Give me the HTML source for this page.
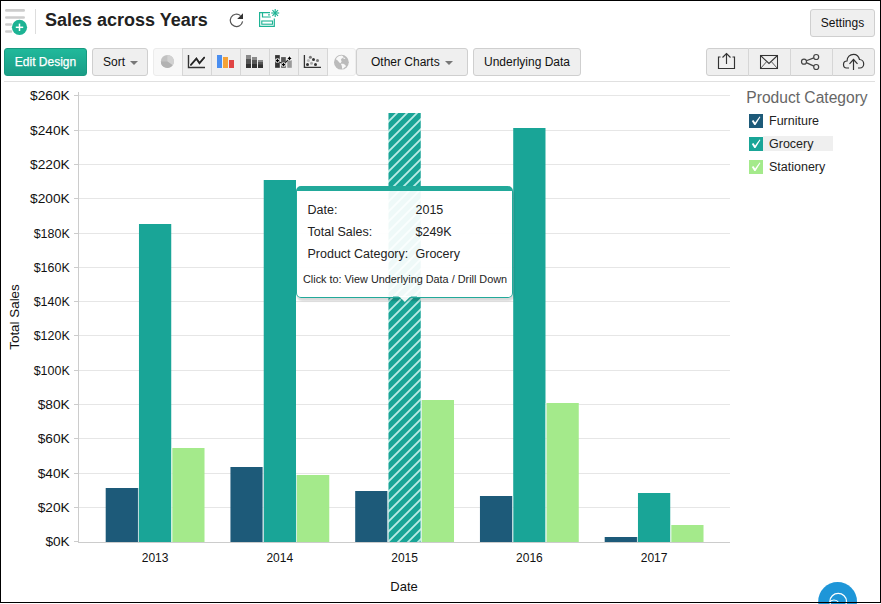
<!DOCTYPE html>
<html><head><meta charset="utf-8">
<style>
*{margin:0;padding:0;box-sizing:border-box}
html,body{width:881px;height:604px;overflow:hidden;background:#fff}
body{position:relative;font-family:"Liberation Sans", sans-serif;color:#222}
.abs{position:absolute}
.btn{position:absolute;top:48px;height:28px;background:#efefef;border:1px solid #cfcfcf;border-radius:3px;font-size:12px;line-height:26px;text-align:center;color:#111}
svg text{font-family:"Liberation Sans", sans-serif}
.yl{font-size:12px;fill:#111}
.xl{font-size:12px;fill:#111}
.at{font-size:13px;fill:#111}
.at2{font-size:13.4px;fill:#111}
</style></head><body>
<!-- frame -->
<div class="abs" style="left:0;top:0;width:881px;height:603px;border:1px solid #000;border-right:none"></div>
<div class="abs" style="left:880px;top:0;width:1px;height:603px;background:#000"></div>

<!-- header -->
<svg class="abs" style="left:0;top:0" width="40" height="40">
 <g stroke="#cdcdcd" stroke-width="2.6" stroke-linecap="round">
  <line x1="6.3" y1="10.4" x2="23.7" y2="10.4"/>
  <line x1="6.3" y1="17.5" x2="23.7" y2="17.5"/>
  <line x1="6.3" y1="24.5" x2="11" y2="24.5"/>
  <line x1="6.3" y1="31.5" x2="11" y2="31.5"/>
 </g>
 <circle cx="19.5" cy="27.3" r="8.3" fill="#fff"/>
 <circle cx="19.5" cy="27.3" r="7.6" fill="#1db394"/>
 <g stroke="#fff" stroke-width="1.5"><line x1="15.8" y1="27.3" x2="23.2" y2="27.3"/><line x1="19.5" y1="23.6" x2="19.5" y2="31"/></g>
</svg>
<div class="abs" style="left:35px;top:9px;width:1px;height:25px;background:#ddd"></div>
<div class="abs" style="left:45px;top:8.8px;font-size:18px;font-weight:bold;color:#222;white-space:nowrap;line-height:22px">Sales across Years</div>
<svg class="abs" style="left:225px;top:8px" width="60" height="26">
 <path d="M15.5 7.6 A6.2 6.2 0 1 0 17.6 13.4" fill="none" stroke="#555" stroke-width="1.2"/>
 <path d="M12.2 11 L18 5.2 L18 11 Z" fill="#333"/>
 <g fill="none" stroke="#1db394" stroke-width="1.2">
  <path d="M45 4.6 L34.6 4.6 L34.6 18.4 L49.3 18.4 L49.3 10.5"/>
  <path d="M37.5 4.6 V9 H45.8"/>
  <rect x="36.8" y="13" width="10.7" height="3.2" stroke-width="1.1"/>
 </g>
 <circle cx="44" cy="6.8" r="0.85" fill="#1db394"/>
 <g stroke="#1db394" stroke-width="1.15"><line x1="50.2" y1="1" x2="50.2" y2="9"/><line x1="46.2" y1="5" x2="54.2" y2="5"/><line x1="47.4" y1="2.2" x2="53" y2="7.8"/><line x1="53" y1="2.2" x2="47.4" y2="7.8"/></g>
</svg>
<div class="btn" style="left:810px;top:9px;width:65px;height:28px;line-height:26.5px">Settings</div>

<!-- toolbar -->
<div class="btn" style="left:4px;width:83px;background:linear-gradient(#20b99b,#1a9c86);border-color:#17997f;color:#fff;font-weight:normal;-webkit-text-stroke:0.25px #fff">Edit Design</div>
<div class="btn" style="left:92px;width:56px;text-align:left;padding-left:10px">Sort <span style="display:inline-block;width:0;height:0;border-left:4px solid transparent;border-right:4px solid transparent;border-top:4px solid #777;vertical-align:middle;margin-left:2px"></span></div>
<div class="btn" style="left:153px;width:203px;background:#f8f8f8;border-color:#ececec"></div>
<div class="btn" style="left:182px;width:146px;border-radius:0;border-color:#d6d6d6"></div>
<div class="abs" style="left:211px;top:48px;width:1px;height:28px;background:#d6d6d6"></div>
<div class="abs" style="left:240px;top:48px;width:1px;height:28px;background:#d6d6d6"></div>
<div class="abs" style="left:269px;top:48px;width:1px;height:28px;background:#d6d6d6"></div>
<div class="abs" style="left:298px;top:48px;width:1px;height:28px;background:#d6d6d6"></div>

<div class="btn" style="left:356px;width:112px">Other Charts <span style="display:inline-block;width:0;height:0;border-left:4px solid transparent;border-right:4px solid transparent;border-top:4px solid #777;vertical-align:middle;margin-left:2px"></span></div>
<div class="btn" style="left:473px;width:108px">Underlying Data</div>
<div class="btn" style="left:706px;width:169px"></div>
<div class="abs" style="left:748px;top:48px;width:1px;height:28px;background:#d6d6d6"></div>
<div class="abs" style="left:790px;top:48px;width:1px;height:28px;background:#d6d6d6"></div>
<div class="abs" style="left:832px;top:48px;width:1px;height:28px;background:#d6d6d6"></div>
<div class="abs" style="left:4px;top:81px;width:871px;height:1px;background:#e0e0e0"></div>
<svg class="abs" style="left:0;top:40px" width="881" height="40">
 <!-- pie -->
 <g transform="translate(167.4,21.4)">
  <circle r="6.5" fill="#c2c2c2"/>
  <path d="M0 0 L0 -6.5 A6.5 6.5 0 0 1 5.3 3.8 Z" fill="#d2d2d2"/>
  <path d="M0 0 L5.3 3.8 A6.5 6.5 0 0 1 -6.5 0 Z" fill="#b2b2b2"/>
 </g>
 <!-- line -->
 <path d="M188.5 15 V27.5 H205" fill="none" stroke="#333" stroke-width="1.4"/>
 <path d="M190.9 24.9 L196.4 18.6 L199.5 23.1 L204.2 17.6" fill="none" stroke="#fff" stroke-width="3.2" stroke-linecap="round" opacity="0.8"/>
 <path d="M190.9 24.9 L196.4 18.6 L199.5 23.1 L204.2 17.6" fill="none" stroke="#262626" stroke-width="1.9" stroke-linecap="round"/>
 <!-- bar color -->
 <rect x="217" y="15" width="5" height="13" fill="#4a8ef0"/>
 <rect x="223" y="17" width="5" height="11" fill="#f5a236"/>
 <rect x="229" y="20" width="5" height="8" fill="#e04444"/>
 <!-- stacked -->
 <rect x="246" y="15" width="5" height="13" fill="#333"/><rect x="246" y="15" width="5" height="4" fill="#8a8a8a"/><rect x="246" y="19" width="5" height="5" fill="#555"/>
 <rect x="252" y="17" width="5" height="11" fill="#333"/><rect x="252" y="17" width="5" height="3" fill="#8a8a8a"/><rect x="252" y="20" width="5" height="4" fill="#555"/>
 <rect x="258" y="20" width="5" height="8" fill="#333"/><rect x="258" y="20" width="5" height="2" fill="#8a8a8a"/><rect x="258" y="22" width="5" height="2.5" fill="#555"/>
 <!-- combo -->
 <g>
 <rect x="275.1" y="15.1" width="4.7" height="12.7" fill="#333"/>
 <rect x="281.1" y="17.1" width="4.7" height="10.7" fill="#555"/>
 <rect x="287.3" y="20.2" width="4.5" height="7.6" fill="#999"/>
 </g>
 <path d="M277.5 20.6 L283.5 24.6 L289.5 18.4" fill="none" stroke="#111" stroke-width="1.1"/>
 <g fill="#fff"><circle cx="277.5" cy="20.6" r="2.4"/><circle cx="283.5" cy="24.6" r="2.4"/><circle cx="289.5" cy="18.4" r="2.4"/></g>
 <g fill="#000"><path d="M277.5 18.5 L278.3 19.8 L279.6 20.6 L278.3 21.400000000000002 L277.5 22.700000000000003 L276.7 21.400000000000002 L275.4 20.6 L276.7 19.8 Z"/><path d="M283.5 22.5 L284.3 23.8 L285.6 24.6 L284.3 25.400000000000002 L283.5 26.700000000000003 L282.7 25.400000000000002 L281.4 24.6 L282.7 23.8 Z"/><path d="M289.5 16.299999999999997 L290.3 17.599999999999998 L291.6 18.4 L290.3 19.2 L289.5 20.5 L288.7 19.2 L287.4 18.4 L288.7 17.599999999999998 Z"/></g>
 <!-- scatter -->
 <path d="M304.4 15 V27.4 H321" fill="none" stroke="#333" stroke-width="1.3"/>
 <g>
 <circle cx="310.4" cy="17.3" r="1.5" fill="#777"/><circle cx="313.5" cy="19.4" r="1.5" fill="#333"/>
 <circle cx="317.5" cy="20.4" r="1.5" fill="#777"/><circle cx="308.4" cy="20.4" r="1.5" fill="#bbb"/>
 <circle cx="307.5" cy="24.4" r="1.5" fill="#333"/><circle cx="311.5" cy="23.3" r="1.5" fill="#aaa"/>
 <circle cx="315.5" cy="24.4" r="1.5" fill="#333"/>
 </g>
 <!-- globe -->
 <circle cx="341.4" cy="22.15" r="7.4" fill="#bbbbbb"/>
 <path d="M335.85 19.24 L336.91 17.38 L339.03 16.06 L341.94 15.53 L343.27 16.59 L342.74 17.91 L341.41 18.71 L340.88 20.03 L341.68 21.36 L340.88 22.68 L340.09 23.21 L338.87 21.88 L337.71 20.56 Z" fill="#f8f8f8"/>
 <path d="M340.88 23.74 L343.27 23.74 L345.39 25.06 L345.91 26.39 L344.06 27.71 L342.74 29.30 L342.05 27.97 L341.84 26.12 Z" fill="#f8f8f8"/>
 <path d="M342.74 17.23 L344.59 17.75 L345.39 18.97 L343.64 18.71 Z" fill="#f8f8f8"/>
 <!-- export -->
 <g fill="none" stroke="#333" stroke-width="1.15">
  <path d="M720.5 17 H718.5 V28.5 H734.5 V17 H732.5"/>
  <path d="M726.5 13.5 V24"/>
  <path d="M722.5 17.5 L726.5 13.5 L730.5 17.5"/>
 </g>
 <!-- mail -->
 <g fill="none" stroke="#333" stroke-width="1.05">
  <rect x="760.5" y="15.5" width="17" height="13"/>
  <path d="M760.5 15.5 L769 23.5 L777.5 15.5"/>
  <path d="M760.5 28.5 L766.3 22" stroke-width="0.8"/>
  <path d="M777.5 28.5 L771.7 22" stroke-width="0.8"/>
 </g>
 <!-- share -->
 <g fill="none" stroke="#444" stroke-width="1.2">
  <circle cx="804" cy="21.7" r="2.5"/><circle cx="816.2" cy="17" r="2.5"/><circle cx="816.2" cy="27" r="2.5"/>
  <path d="M806.3 20.8 L813.9 17.9 M806.3 22.6 L813.9 26.1"/>
 </g>
 <!-- cloud -->
 <g fill="none" stroke="#333" stroke-width="1.2">
  <path d="M849 28 H846.5 C844.5 28 843.5 26.3 843.5 24.5 C843.5 22.5 845 21 847 21 C847 17 850 14.3 853.5 14.3 C856.5 14.3 858.8 16.3 859.5 19.5 C862 19.5 863.7 21.6 863.7 24 C863.7 26.3 862 28 860 28 H858"/>
  <path d="M853.5 19.5 V30"/>
  <path d="M849.5 23.8 L853.5 19.5 L857.5 23.8"/>
 </g>
</svg>

<!-- chart -->
<svg class="abs" style="left:0;top:0" width="881" height="604">
<defs>
 <pattern id="hatch" patternUnits="userSpaceOnUse" width="10" height="10">
  <rect width="10" height="10" fill="#19a597"/>
  <path d="M-2.5 2.5 L2.5 -2.5 M-2.5 12.5 L12.5 -2.5 M7.5 12.5 L12.5 7.5" stroke="#b9ece6" stroke-width="1.8"/>
 </pattern>
</defs>
<rect x="79" y="95" width="651" height="1" fill="#e6e6e6"/>
<rect x="74" y="95" width="4" height="1" fill="#cccccc"/>
<text x="30.00" y="99.5" textLength="39.70" lengthAdjust="spacingAndGlyphs" class="yl">$260K</text>
<rect x="79" y="130" width="651" height="1" fill="#e6e6e6"/>
<rect x="74" y="130" width="4" height="1" fill="#cccccc"/>
<text x="30.00" y="134.5" textLength="39.70" lengthAdjust="spacingAndGlyphs" class="yl">$240K</text>
<rect x="79" y="164" width="651" height="1" fill="#e6e6e6"/>
<rect x="74" y="164" width="4" height="1" fill="#cccccc"/>
<text x="30.00" y="168.5" textLength="39.70" lengthAdjust="spacingAndGlyphs" class="yl">$220K</text>
<rect x="79" y="198" width="651" height="1" fill="#e6e6e6"/>
<rect x="74" y="198" width="4" height="1" fill="#cccccc"/>
<text x="30.00" y="202.5" textLength="39.70" lengthAdjust="spacingAndGlyphs" class="yl">$200K</text>
<rect x="79" y="233" width="651" height="1" fill="#e6e6e6"/>
<rect x="74" y="233" width="4" height="1" fill="#cccccc"/>
<text x="33.70" y="237.5" textLength="36.00" lengthAdjust="spacingAndGlyphs" class="yl">$180K</text>
<rect x="79" y="267" width="651" height="1" fill="#e6e6e6"/>
<rect x="74" y="267" width="4" height="1" fill="#cccccc"/>
<text x="33.70" y="271.5" textLength="36.00" lengthAdjust="spacingAndGlyphs" class="yl">$160K</text>
<rect x="79" y="301" width="651" height="1" fill="#e6e6e6"/>
<rect x="74" y="301" width="4" height="1" fill="#cccccc"/>
<text x="33.70" y="305.5" textLength="36.00" lengthAdjust="spacingAndGlyphs" class="yl">$140K</text>
<rect x="79" y="335" width="651" height="1" fill="#e6e6e6"/>
<rect x="74" y="335" width="4" height="1" fill="#cccccc"/>
<text x="33.70" y="339.5" textLength="36.00" lengthAdjust="spacingAndGlyphs" class="yl">$120K</text>
<rect x="79" y="370" width="651" height="1" fill="#e6e6e6"/>
<rect x="74" y="370" width="4" height="1" fill="#cccccc"/>
<text x="33.70" y="374.5" textLength="36.00" lengthAdjust="spacingAndGlyphs" class="yl">$100K</text>
<rect x="79" y="404" width="651" height="1" fill="#e6e6e6"/>
<rect x="74" y="404" width="4" height="1" fill="#cccccc"/>
<text x="37.70" y="408.5" textLength="32.00" lengthAdjust="spacingAndGlyphs" class="yl">$80K</text>
<rect x="79" y="438" width="651" height="1" fill="#e6e6e6"/>
<rect x="74" y="438" width="4" height="1" fill="#cccccc"/>
<text x="37.70" y="442.5" textLength="32.00" lengthAdjust="spacingAndGlyphs" class="yl">$60K</text>
<rect x="79" y="473" width="651" height="1" fill="#e6e6e6"/>
<rect x="74" y="473" width="4" height="1" fill="#cccccc"/>
<text x="37.70" y="477.5" textLength="32.00" lengthAdjust="spacingAndGlyphs" class="yl">$40K</text>
<rect x="79" y="507" width="651" height="1" fill="#e6e6e6"/>
<rect x="74" y="507" width="4" height="1" fill="#cccccc"/>
<text x="37.70" y="511.5" textLength="32.00" lengthAdjust="spacingAndGlyphs" class="yl">$20K</text>
<text x="45.40" y="546.2" textLength="24.30" lengthAdjust="spacingAndGlyphs" class="yl">$0K</text>
<rect x="74" y="541" width="4" height="1" fill="#cccccc"/>
<rect x="105.70" y="488" width="32.27" height="54" fill="#1d5a79"/>
<rect x="138.97" y="224" width="32.27" height="318" fill="#19a597"/>
<rect x="137.97" y="488" width="1" height="54" fill="#bbd9db"/>
<rect x="172.24" y="448" width="32.27" height="94" fill="#a4ea8b"/>
<rect x="171.24" y="448" width="1" height="94" fill="#cfeede"/>
<text x="155.1" y="562" text-anchor="middle" class="xl">2013</text>
<rect x="230.45" y="467" width="32.27" height="75" fill="#1d5a79"/>
<rect x="263.72" y="180" width="32.27" height="362" fill="#19a597"/>
<rect x="262.72" y="467" width="1" height="75" fill="#bbd9db"/>
<rect x="296.99" y="475" width="32.27" height="67" fill="#a4ea8b"/>
<rect x="295.99" y="475" width="1" height="67" fill="#cfeede"/>
<text x="279.8" y="562" text-anchor="middle" class="xl">2014</text>
<rect x="355.20" y="491" width="32.27" height="51" fill="#1d5a79"/>
<rect x="388.47" y="113" width="32.27" height="429" fill="url(#hatch)"/>
<rect x="387.47" y="491" width="1" height="51" fill="#bbd9db"/>
<rect x="421.74" y="400" width="32.27" height="142" fill="#a4ea8b"/>
<rect x="420.74" y="400" width="1" height="142" fill="#cfeede"/>
<text x="404.6" y="562" text-anchor="middle" class="xl">2015</text>
<rect x="479.95" y="496" width="32.27" height="46" fill="#1d5a79"/>
<rect x="513.22" y="128" width="32.27" height="414" fill="#19a597"/>
<rect x="512.22" y="496" width="1" height="46" fill="#bbd9db"/>
<rect x="546.49" y="403" width="32.27" height="139" fill="#a4ea8b"/>
<rect x="545.49" y="403" width="1" height="139" fill="#cfeede"/>
<text x="529.4" y="562" text-anchor="middle" class="xl">2016</text>
<rect x="604.70" y="537" width="32.27" height="5" fill="#1d5a79"/>
<rect x="637.97" y="493" width="32.27" height="49" fill="#19a597"/>
<rect x="636.97" y="537" width="1" height="5" fill="#bbd9db"/>
<rect x="671.24" y="525" width="32.27" height="17" fill="#a4ea8b"/>
<rect x="670.24" y="525" width="1" height="17" fill="#cfeede"/>
<text x="654.1" y="562" text-anchor="middle" class="xl">2017</text>
<rect x="78" y="92" width="1" height="451" fill="#cccccc"/>
<rect x="78" y="542" width="652" height="1" fill="#cccccc"/>
<text x="404" y="591" text-anchor="middle" class="at">Date</text>
<text transform="translate(19,317) rotate(-90)" text-anchor="middle" class="at2">Total Sales</text>
</svg>
<!-- legend -->
<div class="abs" style="left:746.3px;top:88.8px;font-size:15.6px;color:#666;white-space:nowrap;line-height:18px">Product Category</div>
<div class="abs" style="left:763px;top:136px;width:70px;height:15px;background:#efefef"></div>
<svg class="abs" style="left:745px;top:110px" width="20" height="70">
 <rect x="4" y="4" width="14" height="14" fill="#1d5a79"/>
 <rect x="4" y="27" width="14" height="14" fill="#19a597"/>
 <rect x="4" y="50" width="14" height="14" fill="#a4ea8b"/>
 <g fill="#fff">
  <path d="M6.8 11 L8.4 10 L10.1 12.4 L14.6 6.4 L15.4 7.1 L10.5 14.9 L9.3 14.9 Z"/>
  <path d="M6.8 34 L8.4 33 L10.1 35.4 L14.6 29.4 L15.4 30.1 L10.5 37.9 L9.3 37.9 Z"/>
  <path d="M6.8 57 L8.4 56 L10.1 58.4 L14.6 52.4 L15.4 53.1 L10.5 60.9 L9.3 60.9 Z"/>
 </g>
</svg>
<div class="abs" style="left:769px;top:114px;font-size:12.5px;line-height:15px;white-space:nowrap">Furniture</div>
<div class="abs" style="left:769px;top:137px;font-size:12.5px;line-height:15px;white-space:nowrap">Grocery</div>
<div class="abs" style="left:769px;top:160px;font-size:12.5px;line-height:15px;white-space:nowrap">Stationery</div>

<!-- tooltip -->
<div class="abs" style="left:296px;top:186px;width:217px;height:112px;background:rgba(255,255,255,0.93);border:1px solid #22a99a;border-top:5px solid #22a99a;border-radius:5px;box-shadow:1px 3px 2px rgba(0,0,0,0.15)"></div>
<svg class="abs" style="left:393px;top:296px" width="24" height="10">
 <path d="M0 1 L5.8 1 L11.8 7 L17.8 1 L24 1" fill="none" stroke="#22a99a" stroke-width="1"/>
 <path d="M5.8 0 L11.8 6 L17.8 0 Z" fill="rgba(255,255,255,0.93)"/>
</svg>
<div class="abs" style="left:307.5px;top:203px;font-size:12.5px;line-height:14px;white-space:nowrap;color:#222">Date:</div>
<div class="abs" style="left:307.5px;top:225px;font-size:12.5px;line-height:14px;white-space:nowrap;color:#222">Total Sales:</div>
<div class="abs" style="left:307.5px;top:247px;font-size:12.5px;line-height:14px;white-space:nowrap;color:#222">Product Category:</div>
<div class="abs" style="left:415.5px;top:203px;font-size:12.5px;line-height:14px;white-space:nowrap;color:#222">2015</div>
<div class="abs" style="left:415.5px;top:225px;font-size:12.5px;line-height:14px;white-space:nowrap;color:#222">$249K</div>
<div class="abs" style="left:415.5px;top:247px;font-size:12.5px;line-height:14px;white-space:nowrap;color:#222">Grocery</div>
<div class="abs" style="left:303px;top:273.3px;font-size:10.85px;line-height:13px;white-space:nowrap;color:#222">Click to: View Underlying Data / Drill Down</div>

<!-- help circle -->
<svg class="abs" style="left:810px;top:570px" width="60" height="34">
 <circle cx="27.6" cy="31.4" r="19.4" fill="#1e96d8"/>
 <ellipse cx="28.2" cy="31.3" rx="8.3" ry="7.9" fill="none" stroke="#fff" stroke-width="1.25"/>
 <path d="M19.8 32.3 C21 29.5 26.5 29 28.6 32.5" fill="none" stroke="#fff" stroke-width="1.1"/>
</svg>
<div class="abs" style="left:0;top:602px;width:881px;height:1px;background:#000"></div>
</body></html>
